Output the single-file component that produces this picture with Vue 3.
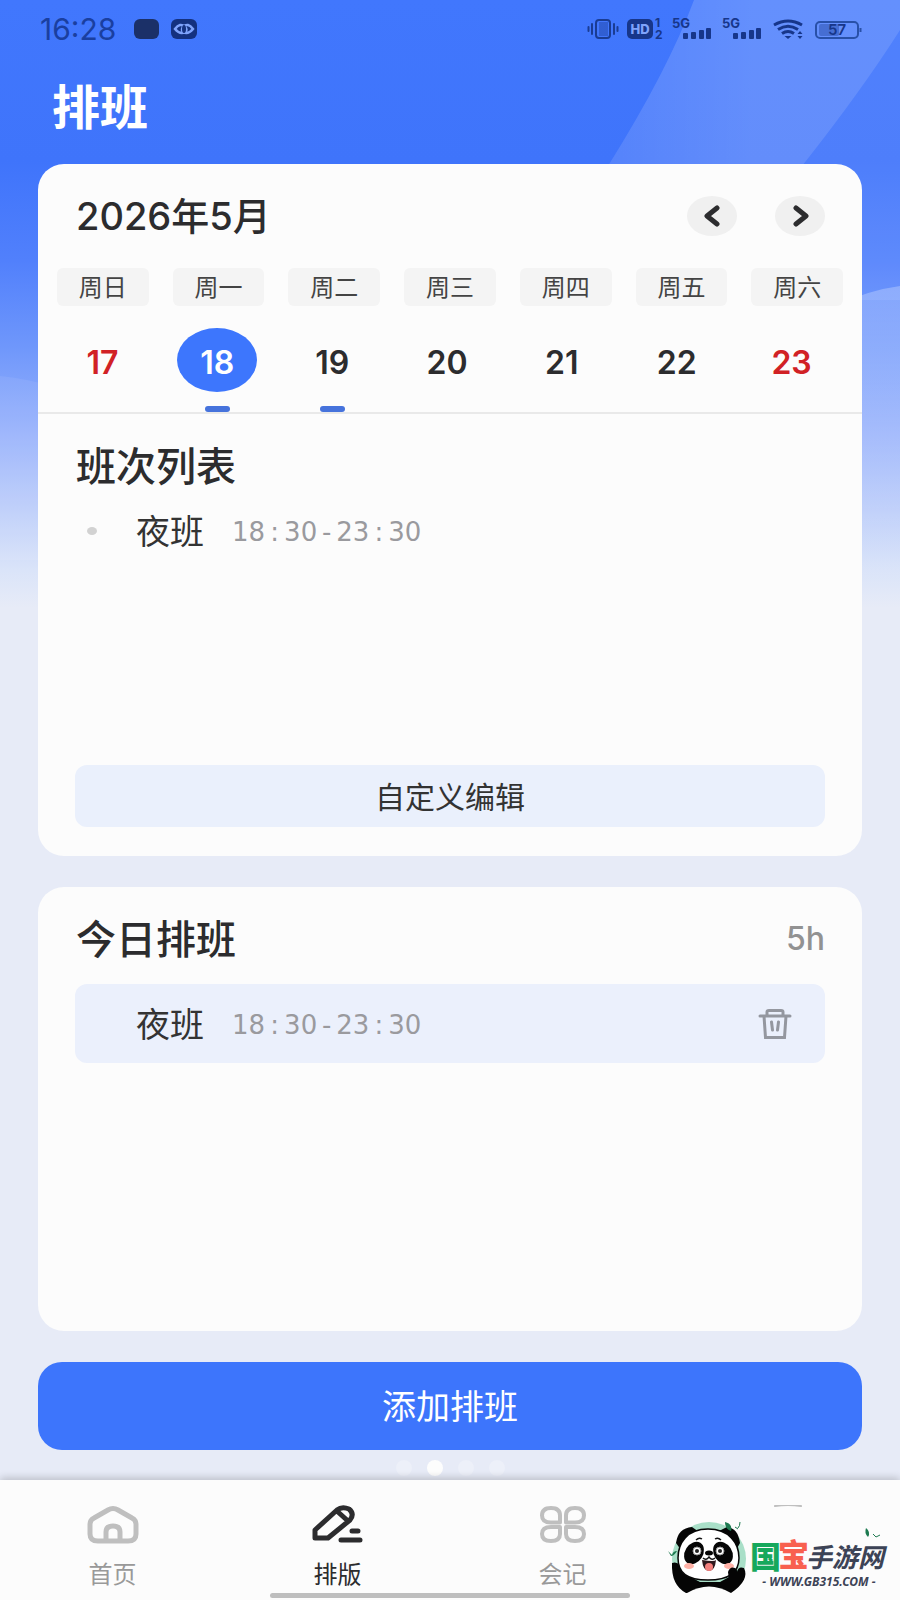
<script setup>
import { ref } from 'vue'

const week = ['周日', '周一', '周二', '周三', '周四', '周五', '周六']

const days = [
  { num: 17, rest: true, marked: false },
  { num: 18, rest: false, marked: true },
  { num: 19, rest: false, marked: true },
  { num: 20, rest: false, marked: false },
  { num: 21, rest: false, marked: false },
  { num: 22, rest: false, marked: false },
  { num: 23, rest: true, marked: false }
]

const selected = ref(18)
const activeTab = ref('排版')

const shifts = [{ name: '夜班', time: '18:30-23:30' }]

// split into digit groups and separators so the separators get a full digit cell
const timeParts = (time) => time.split(/([:-])/)
</script>

<template>
  <div class="page">
    <svg class="backdrop" viewBox="0 0 900 620" preserveAspectRatio="none" aria-hidden="true">
      <defs>
        <linearGradient id="sky" x1="0" y1="0" x2="0" y2="1">
          <stop offset="0" stop-color="#4177fd" />
          <stop offset="0.26" stop-color="#3f74fb" />
          <stop offset="0.42" stop-color="#5180fc" />
          <stop offset="0.56" stop-color="#6f97fb" />
          <stop offset="0.7" stop-color="#98b2fc" />
          <stop offset="0.82" stop-color="#bccdfa" />
          <stop offset="0.92" stop-color="#dae4f9" />
          <stop offset="0.98" stop-color="#e7ebf7" />
        </linearGradient>
        <linearGradient id="band" x1="0" y1="0" x2="1" y2="0">
          <stop offset="0" stop-color="#fff" stop-opacity="0.04" />
          <stop offset="0.5" stop-color="#fff" stop-opacity="0.12" />
          <stop offset="1" stop-color="#fff" stop-opacity="0.12" />
        </linearGradient>
        <linearGradient id="wave" x1="0" y1="0" x2="0" y2="1">
          <stop offset="0" stop-color="#fff" stop-opacity="0.26" />
          <stop offset="1" stop-color="#fff" stop-opacity="0" />
        </linearGradient>
      </defs>
      <rect width="900" height="620" fill="url(#sky)" />
      <path d="M694 0Q668 70 608 166L600 300H900V0Z" fill="#fff" fill-opacity="0.08" />
      <path d="M694 0Q668 70 608 166H802Q862 90 900 30V0Z" fill="url(#band)" />
      <path d="M0 376Q24 378 60 388V560H0Z" fill="#fff" fill-opacity="0.07" />
      <path d="M840 304Q870 290 900 286V590H840Z" fill="url(#wave)" />
    </svg>

    <header class="status">
      <span class="clock">16:28</span>
      <svg class="notices" width="64" height="22" viewBox="0 0 64 22" aria-hidden="true">
        <rect x="0" y="1" width="25" height="20" rx="6" fill="#1b3068" />
        <rect x="37" y="1" width="26" height="20" rx="6" fill="#14317f" />
        <g fill="none" stroke="#7fa3fb" stroke-width="2.500">
          <path d="M41 11Q46 4 51 9Q54 12 51 14Q46 17 41 11Z" />
          <path d="M59 11Q54 4 49 9Q47 12 49 14Q54 17 59 11Z" />
        </g>
        <ellipse cx="50" cy="11" rx="2" ry="4" fill="#14317f" />
      </svg>
      <svg class="signals" width="276" height="34" viewBox="586 12 276 34" aria-hidden="true">
        <g fill="none" stroke="#1a3c93" stroke-width="2" stroke-linecap="round">
          <rect x="596" y="20" width="14" height="18" rx="3" />
          <path d="M592 24V34M588.500 27V31M614 24V34M617.500 27V31" />
        </g>
        <rect x="599" y="22" width="9" height="14" fill="#1a3c93" fill-opacity="0.4" />
        <rect x="627" y="19" width="26" height="20" rx="5" fill="#17368a" />
        <text x="640" y="34" class="hd" text-anchor="middle">HD</text>
        <text x="655" y="27" class="tiny">1</text>
        <text x="655" y="39" class="tiny">2</text>
        <g v-for="x in [672, 722]" :key="x">
          <text :x="x" y="28" class="net">5G</text>
          <g fill="#17368a">
            <rect :x="x + 11" y="33" width="5" height="6" rx="1" />
            <rect :x="x + 19" y="32" width="5" height="7" rx="1" />
            <rect :x="x + 27" y="30" width="5" height="9" rx="1" />
            <rect :x="x + 34" y="28" width="5" height="11" rx="1" />
          </g>
        </g>
        <g fill="none" stroke="#17368a" stroke-width="3">
          <path d="M774 25Q788 17 802 25" />
          <path d="M778 29.500Q788 23 798 29.500" />
          <path d="M782 33.500Q788 29.500 794 33.500" />
        </g>
        <path d="M784.500 36H791.500L788 39Z" fill="#17368a" />
        <path d="M797.500 34L800 31L802.500 34ZM797.500 36L800 39L802.500 36Z" fill="#17368a" />
        <rect x="816" y="22" width="42" height="16" rx="4" fill="none" stroke="#2850a8" stroke-width="2" />
        <rect x="819" y="24" width="20" height="12" rx="2" fill="#1a3c93" fill-opacity="0.4" />
        <path d="M860.500 28V32" stroke="#2850a8" stroke-width="2" />
        <text x="837" y="35" class="charge" text-anchor="middle">57</text>
      </svg>
    </header>

    <h1 class="page-title">排班</h1>

    <main class="content">
      <section class="card">
        <div class="month">
          <h2 class="month-name">2026年5月</h2>
          <div class="month-nav">
            <button type="button" class="arrow" aria-label="上一周">
              <svg width="18" height="22" viewBox="0 0 18 22">
                <path d="M14 3L4 11L14 19" />
              </svg>
            </button>
            <button type="button" class="arrow" aria-label="下一周">
              <svg width="18" height="22" viewBox="0 0 18 22">
                <path d="M5 3L15 11L5 19" />
              </svg>
            </button>
          </div>
        </div>

        <div class="week">
          <span v-for="name in week" :key="name" class="week-name">{{ name }}</span>
        </div>

        <div class="days">
          <div v-for="day in days" :key="day.num" class="day-cell">
            <button
              type="button"
              class="day"
              :class="{ rest: day.rest, selected: day.num === selected }"
              @click="selected = day.num"
            >
              {{ day.num }}
            </button>
            <span class="mark" :class="{ on: day.marked }"></span>
          </div>
        </div>

        <div class="panel">
          <h2 class="heading">班次列表</h2>
          <ul class="shift-list">
            <li v-for="shift in shifts" :key="shift.name" class="shift">
              <span class="bullet"></span>
              <span class="shift-name">{{ shift.name }}</span>
              <span class="shift-time"><span v-for="(part, i) in timeParts(shift.time)" :key="i" :class="{ sep: i % 2 }">{{ part }}</span></span>
            </li>
          </ul>
          <button type="button" class="edit">自定义编辑</button>
        </div>
      </section>

      <section class="card">
        <div class="panel today">
          <div class="today-head">
            <h2 class="heading">今日排班</h2>
            <span class="total">5h</span>
          </div>
          <ul class="today-list">
            <li v-for="shift in shifts" :key="shift.name" class="shift filled">
              <span class="shift-name">{{ shift.name }}</span>
              <span class="shift-time"><span v-for="(part, i) in timeParts(shift.time)" :key="i" :class="{ sep: i % 2 }">{{ part }}</span></span>
              <button type="button" class="remove" aria-label="删除">
                <svg width="34" height="30" viewBox="0 0 34 30">
                  <path d="M2 7H32M9 7V3Q9 1.500 11 1.500H23Q25 1.500 25 3V7M6 7L7.500 28.500H26.500L28 7M13.500 13L14.500 21M20.500 13L19.500 21" />
                </svg>
              </button>
            </li>
          </ul>
        </div>
      </section>

      <button type="button" class="add">添加排班</button>
    </main>

    <div class="pager">
      <span class="pip"></span>
      <span class="pip current"></span>
      <span class="pip"></span>
      <span class="pip"></span>
    </div>

    <nav class="tabs">
      <button type="button" class="tab" :class="{ active: activeTab === '首页' }" @click="activeTab = '首页'">
        <svg width="52" height="40" viewBox="0 0 52 40">
          <path d="M3 19Q3 15 7 13L21 5Q26 2 31 5L45 13Q49 15 49 19V29Q49 36 41 36H11Q3 36 3 29ZM19 36V27Q19 21 26 21Q33 21 33 27V36" />
        </svg>
        <span>首页</span>
      </button>
      <button type="button" class="tab" :class="{ active: activeTab === '排版' }" @click="activeTab = '排版'">
        <svg width="52" height="40" viewBox="0 0 52 40">
          <path d="M3 33V25L25 5Q30 1 37 4Q43 9 38 15L16 33ZM26 7L36 16M40 26H46M29 35H48" />
        </svg>
        <span>排版</span>
      </button>
      <button type="button" class="tab" :class="{ active: activeTab === '会记' }" @click="activeTab = '会记'">
        <svg width="52" height="40" viewBox="0 0 52 40">
          <path class="petals" d="M23 17.500H14Q5 17.500 5 10.500Q5 3 14 3Q23 3 23 10.500ZM29 17.500H38Q47 17.500 47 10.500Q47 3 38 3Q29 3 29 10.500ZM23 22H14Q5 22 5 29Q5 36 14 36Q23 36 23 29ZM29 22H38Q47 22 47 29Q47 36 38 36Q29 36 29 29Z" />
        </svg>
        <span>会记</span>
      </button>
      <button type="button" class="tab" aria-label="我的">
        <svg width="52" height="40" viewBox="0 0 52 40">
          <path class="cap" d="M13 1Q26 -1 39 1" />
        </svg>
      </button>
    </nav>
    <div class="home-bar"></div>

    <svg class="brand" width="252" height="93" viewBox="648 1507 252 93" role="img" aria-label="国宝手游网">
      <rect x="648" y="1507" width="252" height="93" fill="#fcfcfc" />
      <circle cx="709" cy="1559" r="37" fill="#a9dfc8" />
      <g fill="#050505">
        <path d="M676 1543Q678 1528 692 1527L699 1532L681 1550Z" />
        <path d="M740 1543Q738 1528 727 1527L717 1532L736 1550Z" />
        <path d="M672 1563Q680 1560 683 1573L700 1582H720L729 1577Q727 1568 733 1567Q737 1568 737 1572Q738 1566 744 1568Q750 1580 731 1593H725Q708 1583 692 1593H686Q671 1585 672 1563Z" />
      </g>
      <path d="M687 1593Q709 1580 731 1593L724 1600H694Z" fill="#fcfcfc" />
      <path d="M708 1529C729 1529 739 1543 739 1558C739 1573 729 1580 708 1580C687 1580 678 1573 678 1558C678 1543 687 1529 708 1529Z" fill="#fff" stroke="#050505" stroke-width="1.500" />
      <g fill="#050505">
        <ellipse cx="694" cy="1553" rx="9" ry="12" transform="rotate(32 694 1553)" />
        <ellipse cx="723" cy="1553" rx="9" ry="12" transform="rotate(-32 723 1553)" />
        <ellipse cx="709" cy="1553" rx="4" ry="2.500" />
      </g>
      <g fill="#fff" stroke="#999" stroke-width="1">
        <circle cx="697" cy="1551" r="4" />
        <circle cx="720" cy="1551" r="4" />
      </g>
      <circle cx="697" cy="1551" r="2" fill="#222" />
      <circle cx="720" cy="1551" r="2" fill="#222" />
      <path d="M702 1560Q715 1562 716 1560Q715 1571 709 1571Q703 1571 702 1560Z" fill="#30191d" />
      <ellipse cx="709" cy="1567" rx="4" ry="4" fill="#f37f7d" />
      <path d="M703 1558Q706 1561 709 1557Q712 1561 715 1558M696 1540Q699 1537 702 1539M715 1539Q718 1537 721 1540" fill="none" stroke="#111" stroke-width="1.400" />
      <ellipse cx="689" cy="1566" rx="5" ry="3" fill="#ffb1a6" />
      <ellipse cx="729" cy="1566" rx="5" ry="3" fill="#ffb1a6" />
      <path d="M728 1572Q730 1566 735 1568Q737 1569 737 1572Q742 1567 744 1572V1580H729Z" fill="#050505" />
      <g fill="#1d7a50">
        <path d="M725 1522Q733 1524 731 1531Q725 1529 725 1522Z" />
        <path d="M668 1551L672 1555Q673 1551 677 1551Q674 1556 671 1556Z" />
        <path d="M866 1528Q871 1532 868 1537Q864 1533 866 1528Z" />
      </g>
      <path d="M735 1527L738 1529M740 1522Q740 1526 738 1528M873 1534L876 1537L880 1535" fill="none" stroke="#1d7a50" />
      <text x="750" y="1568" class="brand-main green">国</text>
      <text x="778" y="1566" class="brand-main red">宝</text>
      <text x="806" y="1567" class="brand-rest">手游网</text>
      <text x="819" y="1586" class="brand-url" text-anchor="middle">- WWW.GB315.COM -</text>
    </svg>
  </div>
</template>

<style>
body {
  margin: 0;
}
</style>

<style scoped>
.page {
  position: relative;
  display: flex;
  flex-direction: column;
  min-height: 100vh;
  background: #e7ebf7;
  color: #2c2c2e;
  font-family: Inter, "Noto Sans CJK SC", sans-serif;
}
.backdrop {
  position: absolute;
  top: 0;
  left: 0;
  width: 100%;
  height: 620px;
}
button {
  padding: 0;
  border: 0;
  background: none;
  color: inherit;
  font-family: inherit;
  cursor: pointer;
}
h1,
h2,
ul {
  margin: 0;
  padding: 0;
  list-style: none;
}
h2 {
  font-weight: 500;
}

.status {
  position: relative;
  display: flex;
  align-items: center;
  height: 58px;
  padding: 0 38px 0 40px;
  color: #1a3fa0;
}
.clock {
  font-size: 30px;
}
.notices {
  margin-left: 18px;
}
.signals {
  margin-left: auto;
}
.hd {
  fill: #7fa3fb;
  font-size: 13px;
  font-weight: 800;
}
.tiny {
  fill: #17368a;
  font-size: 12px;
  font-weight: 700;
}
.net {
  fill: #17368a;
  font-size: 13px;
  font-weight: 700;
}
.charge {
  fill: #17368a;
  font-size: 15px;
  font-weight: 600;
}

.page-title {
  position: relative;
  padding: 22px 52px 28px;
  color: #fff;
  font-size: 48px;
  font-weight: 700;
  line-height: 56px;
}

.content {
  position: relative;
  display: flex;
  flex-direction: column;
  flex: 1;
  gap: 31px;
  padding: 0 38px;
}
.card {
  border-radius: 26px;
  background: #fcfcfc;
}
.month {
  display: flex;
  align-items: center;
  justify-content: space-between;
  height: 40px;
  padding: 32px 37px 0 38px;
}
.month-name {
  font-size: 38px;
  line-height: 40px;
}
.month-nav {
  display: flex;
  gap: 38px;
}
.arrow {
  display: flex;
  align-items: center;
  justify-content: center;
  width: 50px;
  height: 40px;
  border-radius: 50%;
  background: #f0f0f0;
}
.arrow svg {
  fill: none;
  stroke: #2c2c2e;
  stroke-width: 5;
  stroke-linecap: round;
  stroke-linejoin: round;
}
.week {
  display: grid;
  grid-template-columns: repeat(7, 1fr);
  gap: 24px;
  padding: 32px 19px 0;
}
.week-name {
  height: 38px;
  border-radius: 6px;
  background: #f4f4f4;
  color: #444;
  font-size: 24px;
  line-height: 40px;
  text-align: center;
}
.days {
  display: grid;
  grid-template-columns: repeat(7, 1fr);
  padding: 22px 13px 0 7px;
  border-bottom: 2px solid #e9e9e9;
}
.day-cell {
  display: flex;
  flex-direction: column;
  align-items: center;
  gap: 14px;
}
.day {
  width: 80px;
  height: 64px;
  padding-top: 4px;
  border-radius: 50%;
  font-size: 32px;
  font-weight: 600;
}
.day.rest {
  color: #d12125;
}
.day.selected {
  background: #3d76fd;
  color: #fff;
}
.mark {
  width: 25px;
  height: 6px;
  border-radius: 3px;
}
.mark.on {
  background: #4673dc;
}

.panel {
  padding: 28px 37px 29px;
}
.heading {
  padding: 2px 0 0 1px;
  font-size: 40px;
  line-height: 46px;
}
.shift-list {
  min-height: 254px;
  margin-top: 21px;
}
.shift {
  display: flex;
  align-items: center;
  height: 40px;
}
.bullet {
  width: 10px;
  height: 8px;
  margin: 0 39px 0 12px;
  border-radius: 50%;
  background: #d2d2d2;
}
.shift-name {
  padding-top: 2px;
  color: #333;
  font-size: 34px;
  line-height: 40px;
}
.shift-time {
  padding-top: 2px;
  margin-left: 28px;
  color: #9a9a9e;
  font-family: "DejaVu Sans", sans-serif;
  font-size: 26px;
  line-height: 40px;
}
.sep {
  display: inline-block;
  width: 19px;
  text-align: center;
}
.edit {
  display: block;
  width: 100%;
  height: 62px;
  padding-bottom: 2px;
  border-radius: 12px;
  background: #eaf0fc;
  color: #333;
  font-size: 30px;
}

.today {
  min-height: 387px;
}
.today-head {
  display: flex;
  align-items: center;
  justify-content: space-between;
}
.total {
  color: #929292;
  font-size: 32px;
  font-weight: 500;
  line-height: 46px;
}
.today-list {
  margin-top: 21px;
}
.shift.filled {
  height: 79px;
  padding: 0 33px 0 61px;
  border-radius: 12px;
  background: #ebf0fc;
}
.remove {
  display: flex;
  margin-left: auto;
}
.remove svg {
  fill: none;
  stroke: #94979f;
  stroke-width: 3;
  stroke-linecap: round;
}
.add {
  height: 88px;
  padding-bottom: 3px;
  border-radius: 24px;
  background: #3d75fc;
  color: #fff;
  font-size: 34px;
}

.pager {
  position: relative;
  display: flex;
  justify-content: center;
  gap: 15px;
  padding: 10px 0 4px;
}
.pip {
  width: 16px;
  height: 16px;
  border-radius: 50%;
  background: rgba(255, 255, 255, 0.25);
}
.pip.current {
  background: #fdfdfd;
}

.tabs {
  position: relative;
  display: grid;
  grid-template-columns: repeat(4, 1fr);
  height: 120px;
  background: #fcfcfc;
  box-shadow: 0 -2px 8px rgba(0, 0, 0, 0.2);
}
.tab {
  display: flex;
  flex-direction: column;
  align-items: center;
  gap: 13px;
  padding-top: 25px;
  color: #999;
  font-size: 24px;
  line-height: 34px;
}
.tab svg {
  fill: none;
  stroke: #bfbfbf;
  stroke-width: 5;
  stroke-linecap: round;
  stroke-linejoin: round;
}
.tab .petals {
  stroke-width: 4;
}
.tab .cap {
  stroke-width: 2;
}
.tab.active {
  color: #2c2c2e;
}
.tab.active svg {
  stroke: #2c2c2e;
}
.home-bar {
  position: absolute;
  bottom: 2px;
  left: 30%;
  width: 40%;
  height: 5px;
  border-radius: 3px;
  background: #bebebe;
}

.brand {
  position: absolute;
  right: 0;
  bottom: 0;
}
.brand-main {
  font-family: "Noto Sans CJK SC", sans-serif;
  font-size: 31px;
  font-weight: 900;
}
.green {
  fill: #16a85c;
}
.red {
  fill: #f8604f;
}
.brand-rest {
  fill: #3c4356;
  font-family: "Noto Sans CJK SC", sans-serif;
  font-size: 26px;
  font-style: italic;
  font-weight: 700;
}
.brand-url {
  fill: #3c4356;
  font-family: "Noto Sans", sans-serif;
  font-size: 12px;
  font-style: italic;
  font-weight: 700;
}
</style>
